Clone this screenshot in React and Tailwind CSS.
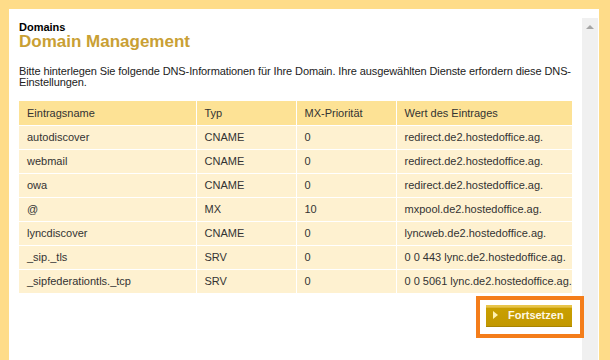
import React from "react";

const rows = [
  ["autodiscover", "CNAME", "0", "redirect.de2.hostedoffice.ag."],
  ["webmail", "CNAME", "0", "redirect.de2.hostedoffice.ag."],
  ["owa", "CNAME", "0", "redirect.de2.hostedoffice.ag."],
  ["@", "MX", "10", "mxpool.de2.hostedoffice.ag."],
  ["lyncdiscover", "CNAME", "0", "lyncweb.de2.hostedoffice.ag."],
  ["_sip._tls", "SRV", "0", "0 0 443 lync.de2.hostedoffice.ag."],
  ["_sipfederationtls._tcp", "SRV", "0", "0 0 5061 lync.de2.hostedoffice.ag."],
];

const headers = ["Eintragsname", "Typ", "MX-Priorität", "Wert des Eintrages"];

export default function App() {
  return (
    <div className="flex h-[360px] w-[610px] overflow-hidden bg-[#fedc89] pl-[9px] pr-[11px] pt-[9px] font-['Liberation_Sans',Arial,sans-serif] text-[11px] text-[#333]">
      <div className="flex flex-1 bg-white pr-[1px] pt-[9px]">
        {/* content */}
        <div className="flex-1 px-[10px] pt-[3px]">
          <div className="text-[11px] font-bold leading-[13px] text-black">Domains</div>
          <h1 className="text-[17px] font-bold leading-[16px] text-[#c9a034]">Domain Management</h1>

          <p className="mt-[16px] leading-[11px] tracking-[-0.1px] text-[#222]">
            <span className="whitespace-nowrap">
              Bitte hinterlegen Sie folgende DNS-Informationen für Ihre Domain. Ihre ausgewählten Dienste erfordern diese DNS-
            </span>
            <br />
            Einstellungen.
          </p>

          <table className="mt-[13px] w-[553px] table-fixed border-collapse">
            <colgroup>
              <col className="w-[177px]" />
              <col className="w-[100px]" />
              <col className="w-[100px]" />
              <col className="w-[176px]" />
            </colgroup>
            <thead>
              <tr className="bg-[#fde295]">
                {headers.map((h, i) => (
                  <th
                    key={h}
                    className={
                      "h-[24px] border-b border-white px-[8px] text-left font-normal " +
                      (i < 3 ? "border-r" : "")
                    }
                  >
                    {h}
                  </th>
                ))}
              </tr>
            </thead>
            <tbody>
              {rows.map((r, ri) => (
                <tr key={ri} className="bg-[#fef1d0]">
                  {r.map((c, i) => (
                    <td
                      key={i}
                      className={
                        "h-[24px] border-b border-white px-[8px] whitespace-nowrap " +
                        (i < 3 ? "border-r" : "")
                      }
                    >
                      {c}
                    </td>
                  ))}
                </tr>
              ))}
            </tbody>
          </table>

          <div className="mt-[11px] flex justify-end">
            <div className="relative">
              <button className="flex h-[22px] w-[86px] items-center border-b border-[#a88400] bg-gradient-to-b from-[#e8c54a] from-[10%] via-[#c99f00] via-[15%] to-[#c29800] pl-[7px] text-[11px] font-bold text-[#fff8e4]">
                <svg width="5" height="8" viewBox="0 0 5 8" className="mr-[10px]">
                  <path d="M0 0 L5 4 L0 8 Z" fill="#fff2b0" />
                </svg>
                Fortsetzen
              </button>
              {/* highlight annotation */}
              <div className="pointer-events-none absolute -bottom-[11px] -left-[10px] -right-[12px] -top-[9px] border-4 border-[#f47d1a]" />
            </div>
          </div>
        </div>

        {/* scrollbar */}
        <div className="flex w-[16px] justify-center bg-[#f0f0f0] pt-[7px]">
          <svg width="8" height="4" viewBox="0 0 8 4">
            <path d="M0 4 L4 0 L8 4 Z" fill="#a6a6a6" />
          </svg>
        </div>
      </div>
    </div>
  );
}
